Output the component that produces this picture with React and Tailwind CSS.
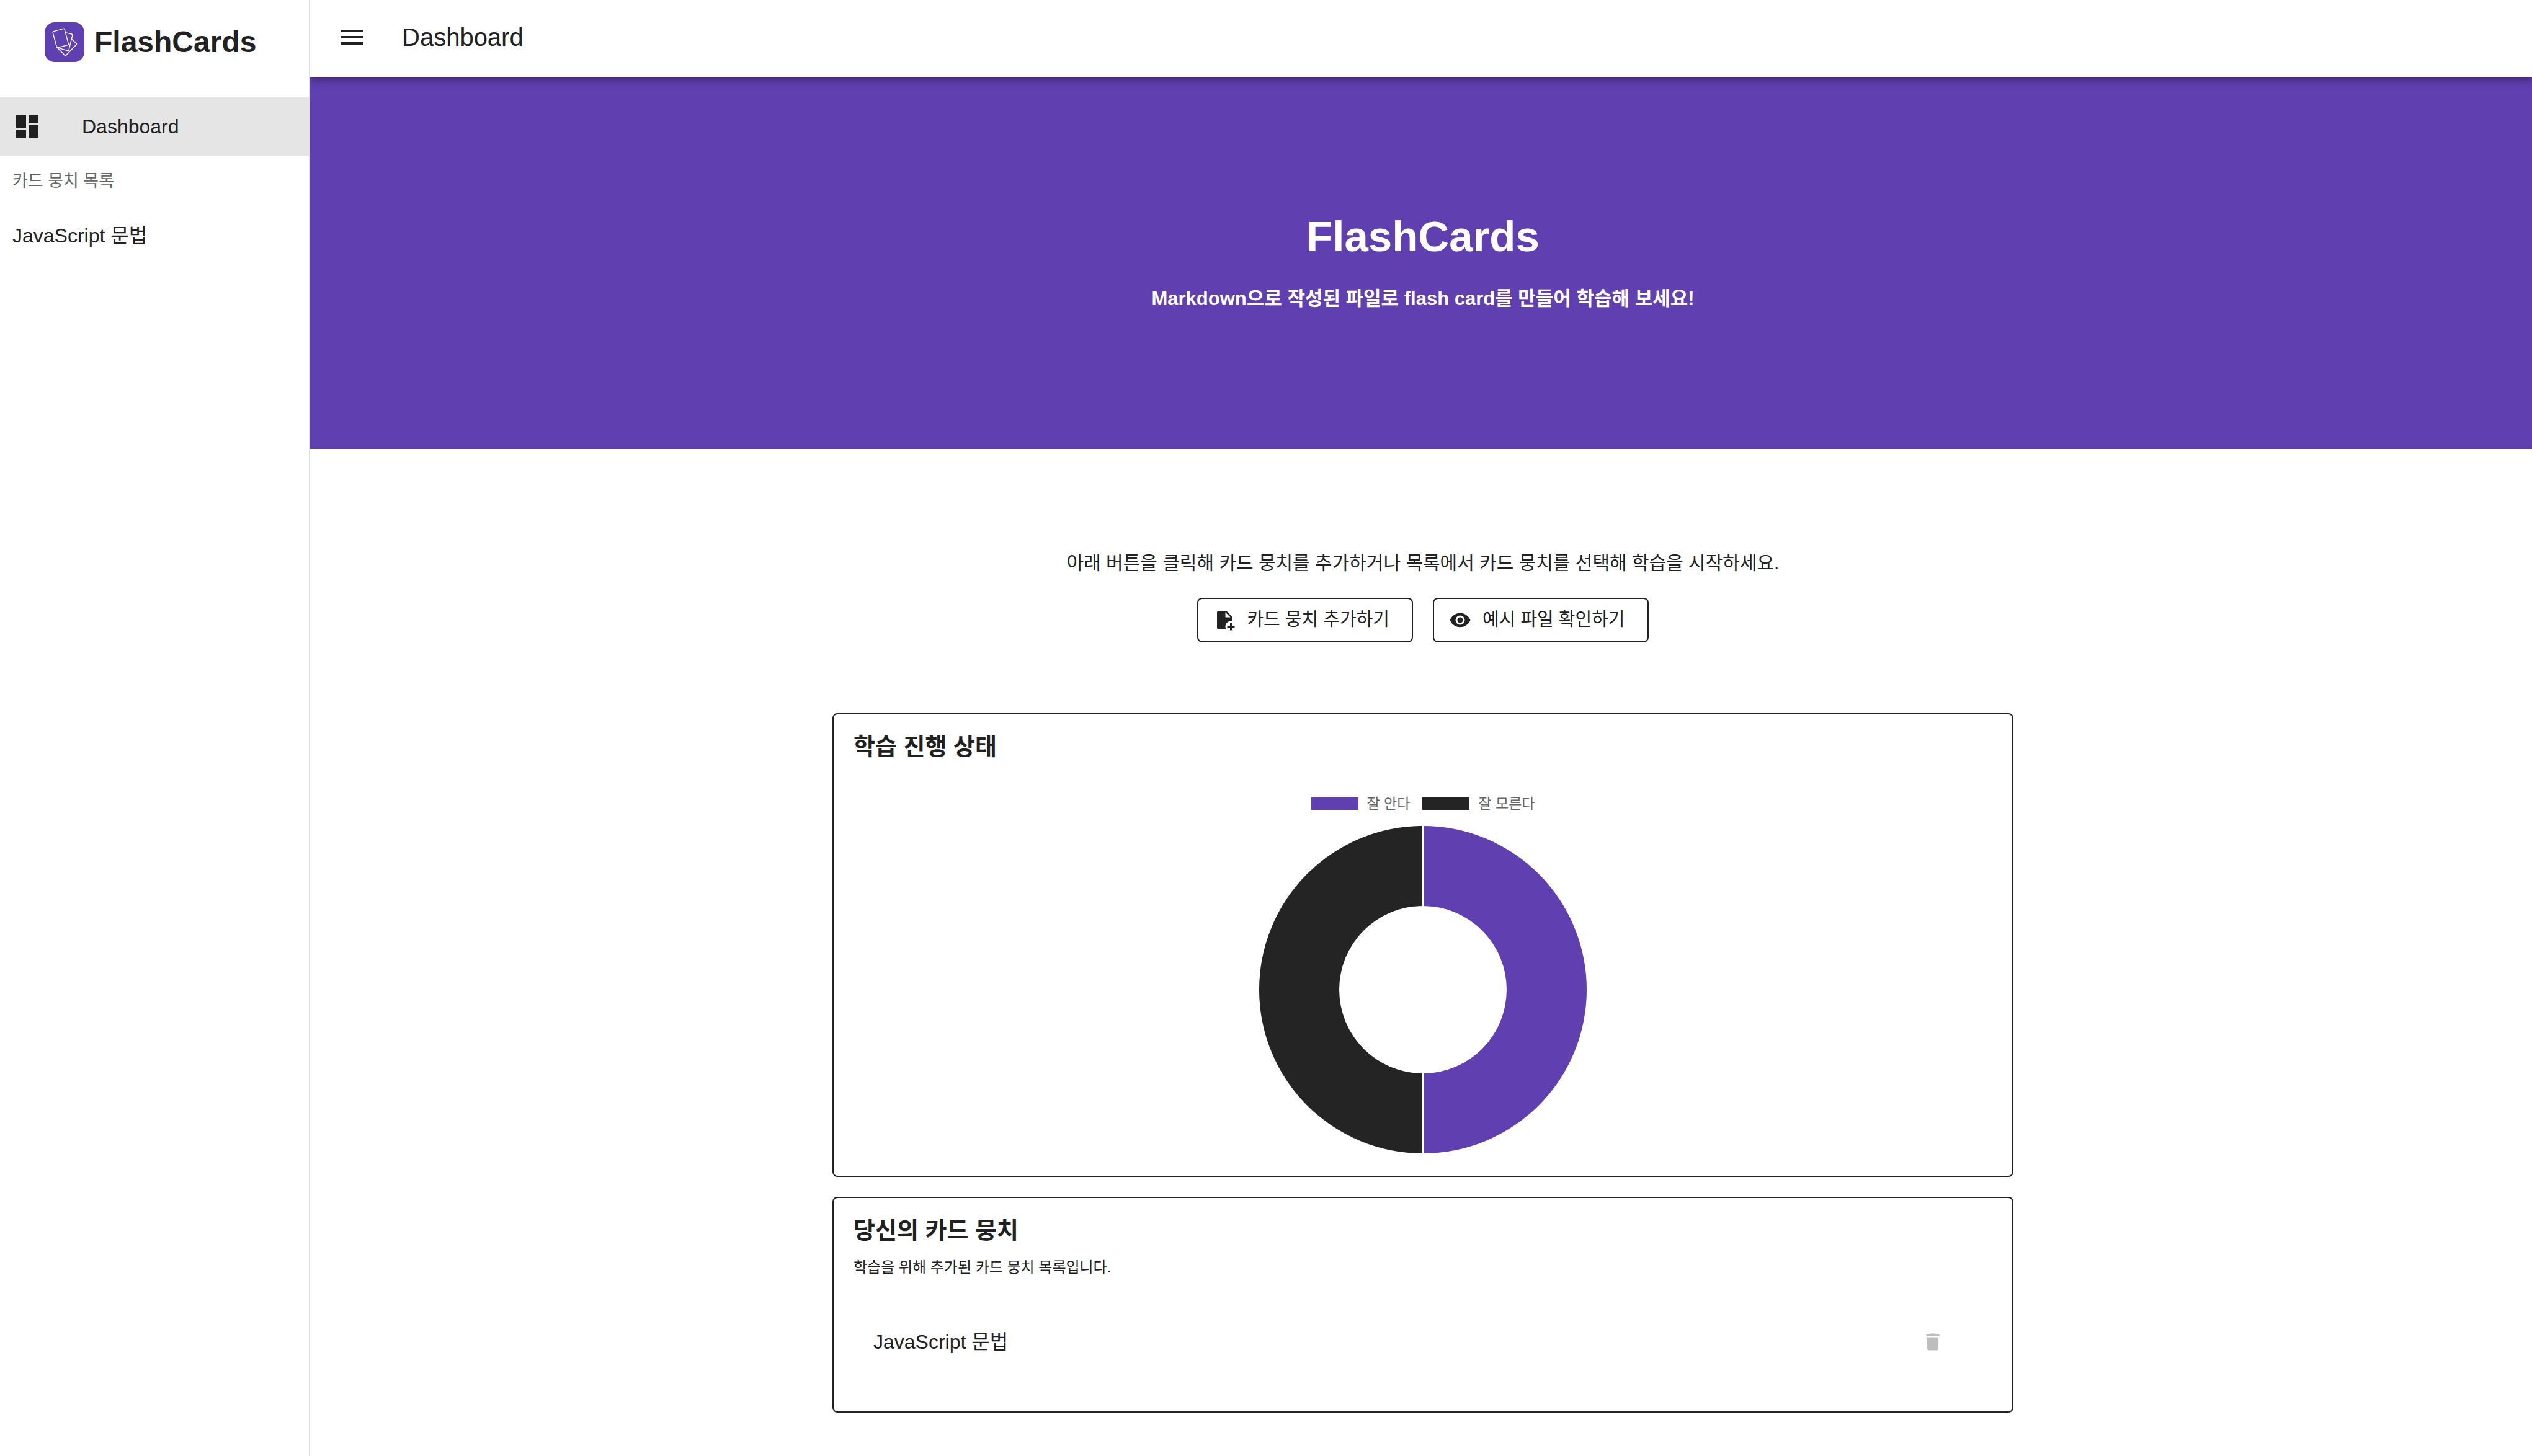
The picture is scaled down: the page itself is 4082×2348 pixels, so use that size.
const icons = {
  dashboard: "M13,3V9H21V3M13,21H21V11H13M3,21H11V15H3M3,13H11V3H3V13Z",
  menu: "M3,6H21V8H3V6M3,11H21V13H3V11M3,16H21V18H3V16Z",
  filePlus:
    "M14 2H6C4.89 2 4 2.89 4 4V20C4 21.11 4.89 22 6 22H13.81C13.28 21.09 13 20.05 13 19C13 15.69 15.69 13 19 13C19.34 13 19.67 13.03 20 13.08V8L14 2M13 9V3.5L18.5 9H13M23 20H20V23H18V20H15V18H18V15H20V18H23V20Z",
  eye: "M12,9A3,3 0 0,0 9,12A3,3 0 0,0 12,15A3,3 0 0,0 15,12A3,3 0 0,0 12,9M12,17A5,5 0 0,1 7,12A5,5 0 0,1 12,7A5,5 0 0,1 17,12A5,5 0 0,1 12,17M12,4.5C7,4.5 2.73,7.61 1,12C2.73,16.39 7,19.5 12,19.5C17,19.5 21.27,16.39 23,12C21.27,7.61 17,4.5 12,4.5Z",
  trash: "M19,4H15.5L14.5,3H9.5L8.5,4H5V6H19M6,19A2,2 0 0,0 8,21H16A2,2 0 0,0 18,19V7H6V19Z",
};

function Icon({ name, className }) {
  return (
    <svg viewBox="0 0 24 24" fill="currentColor" aria-hidden="true" className={className}>
      <path d={icons[name]} />
    </svg>
  );
}

function Logo() {
  return (
    <svg viewBox="0 0 64 64" aria-hidden="true" className="size-16 shrink-0">
      <rect width="64" height="64" rx="16" fill="#603fb0" />
      <g fill="none" stroke="#fff" strokeWidth="1.4" strokeLinejoin="round" strokeLinecap="round">
        <path d="M14.6 14.6 30 10.3Q31.8 9.8 32.2 11.6L38.3 34.6Q38.7 36.1 37.2 36.6L21.2 40.8Q19.8 41.1 19.4 39.6L13.2 17Q12.8 15.1 14.6 14.6Z" />
        <path d="M33.4 16.6 43.6 19Q45.2 19.4 44.8 21L39 44.4Q38.5 46.1 36.8 45.6L20.4 40.9" />
        <path d="M43.8 27.2 51 34Q52 35.1 51 36.1L34.6 52.9Q33.4 54.1 32.2 52.9L20.4 40.9" />
      </g>
    </svg>
  );
}

function Sidebar() {
  return (
    <aside className="w-[500px] shrink-0 border-r-2 border-[#e0e0e0] bg-white">
      <a href="#" className="flex items-center gap-4 pt-9 pb-14 pl-[72px]">
        <Logo />
        <span className="text-[48px] leading-16 font-bold">FlashCards</span>
      </a>
      <nav>
        <a href="#" aria-current="page" className="flex h-24 items-center gap-16 bg-[#e5e5e5] px-5 text-[32px]">
          <Icon name="dashboard" className="size-12" />
          Dashboard
        </a>
        <h2 className="flex h-20 items-center px-5 text-[27px] text-[#666]">카드 뭉치 목록</h2>
        <a href="#" className="flex h-24 items-center px-5 text-[32px]">
          JavaScript 문법
        </a>
      </nav>
    </aside>
  );
}

function OutlineButton({ icon, children }) {
  return (
    <button
      type="button"
      className="flex h-18 items-center gap-[18px] rounded-lg border-2 border-[#212121] pr-9 pl-6 text-[29px]"
    >
      <Icon name={icon} className="size-9" />
      {children}
    </button>
  );
}

function LegendItem({ swatch, children }) {
  return (
    <li className="flex items-center gap-[14px]">
      <span className={`h-5 w-[76px] ${swatch}`} />
      {children}
    </li>
  );
}

function Doughnut() {
  return (
    <svg viewBox="0 0 528 528" role="img" aria-label="잘 안다 50%, 잘 모른다 50%" className="mt-6 size-[528px]">
      <path d="M264 0A264 264 0 0 1 264 528V399A135 135 0 0 0 264 129Z" fill="#603fb0" />
      <path d="M264 0A264 264 0 0 0 264 528V399A135 135 0 0 1 264 129Z" fill="#242424" />
      <path d="M264 0V130M264 398V528" stroke="#fff" strokeWidth="4" />
    </svg>
  );
}

function Card({ title, className, children }) {
  return (
    <section className={`rounded-lg border-2 border-[#212121] px-8 pt-6 ${className}`}>
      <h2 className="text-[38px] leading-14 font-bold">{title}</h2>
      {children}
    </section>
  );
}

export default function App() {
  return (
    <div className="flex min-h-screen bg-white font-['Liberation_Sans','Noto_Sans_CJK_KR',sans-serif] text-[#212121]">
      <Sidebar />
      <div className="min-w-0 flex-1 overflow-hidden">
        <header className="relative z-10 flex h-31 items-center gap-11 bg-white pb-1 pl-8 shadow-[0_4px_8px_-2px_rgba(0,0,0,0.2),0_8px_10px_rgba(0,0,0,0.14),0_2px_20px_rgba(0,0,0,0.12)]">
          <button type="button" aria-label="메뉴" className="p-3">
            <Icon name="menu" className="size-12" />
          </button>
          <h1 className="text-[40px]">Dashboard</h1>
        </header>

        <main>
          <section className="flex min-h-[600px] flex-col items-center justify-center gap-8 bg-[#603fb0] pt-1 pl-[6px] text-white">
            <h2 className="text-[69px] leading-20 font-bold">FlashCards</h2>
            <p className="text-[31px] leading-14 font-bold">
              Markdown으로 작성된 파일로 flash card를 만들어 학습해 보세요!
            </p>
          </section>

          <div className="flex flex-col items-center pt-40 pb-16 pl-[6px]">
            <p className="text-[30px] leading-12">
              아래 버튼을 클릭해 카드 뭉치를 추가하거나 목록에서 카드 뭉치를 선택해 학습을 시작하세요.
            </p>
            <div className="mt-8 flex gap-8">
              <OutlineButton icon="filePlus">카드 뭉치 추가하기</OutlineButton>
              <OutlineButton icon="eye">예시 파일 확인하기</OutlineButton>
            </div>

            <div className="mt-[114px] flex w-full max-w-[1904px] flex-col gap-8">
              <Card title="학습 진행 상태" className="pb-9">
                <div className="mt-[52px] flex flex-col items-center">
                  <ul className="flex gap-5 text-[23px] leading-6 text-[#666]">
                    <LegendItem swatch="bg-[#603fb0]">잘 안다</LegendItem>
                    <LegendItem swatch="bg-[#242424]">잘 모른다</LegendItem>
                  </ul>
                  <Doughnut />
                </div>
              </Card>

              <Card title="당신의 카드 뭉치" className="pb-16">
                <p className="mt-3 text-2xl leading-10">학습을 위해 추가된 카드 뭉치 목록입니다.</p>
                <ul className="mt-[52px]">
                  <li className="flex h-24 items-center justify-between pr-[60px] pl-8 text-[32px]">
                    <a href="#">JavaScript 문법</a>
                    <button
                      type="button"
                      aria-label="JavaScript 문법 삭제"
                      className="flex size-18 items-center justify-center text-[#bdbdbd]"
                    >
                      <Icon name="trash" className="size-9" />
                    </button>
                  </li>
                </ul>
              </Card>
            </div>
          </div>
        </main>
      </div>
    </div>
  );
}
